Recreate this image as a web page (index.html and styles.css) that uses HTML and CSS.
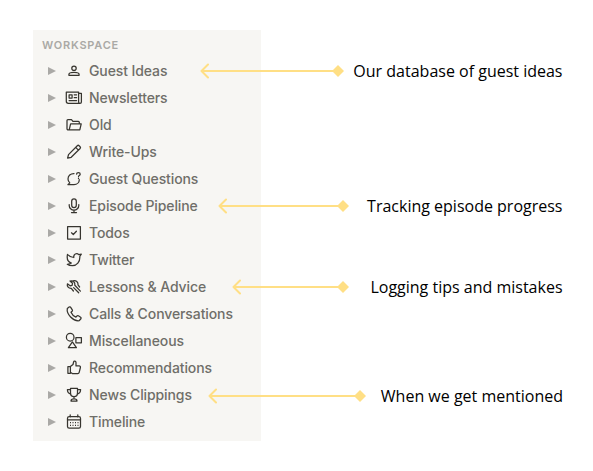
FILE: index.html
```
<!DOCTYPE html>
<html lang="en">
<head>
<meta charset="utf-8">
<title>Workspace</title>
<link rel="stylesheet" href="styles.css">
</head>
<body>
<nav class="sidebar">
  <h2 class="heading">WORKSPACE</h2>
  <ul class="pages">
    <li class="page"><i class="toggle"></i><svg class="icon" viewBox="0 0 18 18"><circle cx="9" cy="6.2" r="2.2"/><path d="M3.9 13.3v-.8c0-1.5 2.2-2.1 5.1-2.1s5.1.6 5.1 2.1v.8z"/></svg><span class="name">Guest Ideas</span>
      <div class="note note-ideas"><svg class="arrow" width="145" height="16"><path class="line" d="M1.5 8H138M8 1.5L1.5 8L8 14.5"/><path class="diamond" d="M138 2l6 6-6 6-6-6z"/></svg><span>Our database of guest ideas</span></div></li>
    <li class="page"><i class="toggle"></i><svg class="icon" viewBox="0 0 18 18"><path d="M14.9 14.3H3.3a2 2 0 0 1-2-2V3h12.3v9.9a1.4 1.4 0 0 0 2.8 0V4.4h-2.8M4.1 5.8h3v3.2h-3zM9.2 5.8h2.4M9.2 8.7h2.4M4.1 11.5h7.5"/></svg><span class="name">Newsletters</span></li>
    <li class="page"><i class="toggle"></i><svg class="icon" viewBox="0 0 18 18"><path d="M4.2 13.9H3.1A1.1 1.1 0 0 1 2 12.8V4.6c0-.5.4-.9.9-.9h3.6l1.4 1.7h5.5c.5 0 .9.4.9.9v1.3M4.2 13.9l1.4-6.1h10.6l-1.4 6.1z"/></svg><span class="name">Old</span></li>
    <li class="page"><i class="toggle"></i><svg class="icon" viewBox="0 0 18 18"><path d="M2.6 15.2l.9-3.6 8.8-8.9a1.3 1.3 0 0 1 1.8 0l1 1a1.3 1.3 0 0 1 0 1.8l-8.9 8.8zM10.7 4.4l2.7 2.7"/></svg><span class="name">Write-Ups</span></li>
    <li class="page"><i class="toggle"></i><svg class="icon" viewBox="0 0 18 18"><path d="M9 3.6C5.5 3.5 3 5.8 3 9c0 1.6.7 2.9 1.8 3.9l-1.9 1.7H9c3.1 0 5.3-2.2 5.3-4.9M11.6 4.1c.1-2 3.6-2 3.6.1 0 1.3-1.7 1.2-1.7 2.4M13.5 8v.5"/></svg><span class="name">Guest Questions</span></li>
    <li class="page"><i class="toggle"></i><svg class="icon" viewBox="0 0 18 18"><rect x="6.7" y="1.9" width="4.6" height="8.6" rx="2.3"/><path d="M4.2 7.6v.8a4.8 4.8 0 0 0 9.6 0v-.8M9 13.2v2.3M6.5 15.5h5"/></svg><span class="name">Episode Pipeline</span>
      <div class="note note-pipeline"><svg class="arrow" width="132" height="16"><path class="line" d="M1.5 8H125M8 1.5L1.5 8L8 14.5"/><path class="diamond" d="M125 2l6 6-6 6-6-6z"/></svg><span>Tracking episode progress</span></div></li>
    <li class="page"><i class="toggle"></i><svg class="icon" viewBox="0 0 18 18"><path d="M2.6 2.6h12.8V15H2.6zM6.5 8.8l1.8 1.7 3.1-3.3"/></svg><span class="name">Todos</span></li>
    <li class="page"><i class="toggle"></i><svg class="icon" viewBox="0 0 18 18"><path d="M2.5 3.4c1.7 2 3.8 3 6.3 3.1C8.3 3 11.8 1.6 13.8 3.6l2.5-.4-1.5 2.3c.4 5.6-3.1 9.2-7.3 9.2-2.2 0-4-.5-5.2-1.4 1.8 0 3-.5 4-1.3C2.8 10.9 1.7 7.4 2.5 3.4z"/></svg><span class="name">Twitter</span></li>
    <li class="page"><i class="toggle"></i><svg class="icon" viewBox="0 0 18 18"><path d="M8.4 13L6.3 10.3C3.6 10.5 1.8 8.3 2.4 5.8l2.7 2 2-.5.4-2L5 3C8 2.2 10.4 4.5 9.8 7.2l5.6 5.9M8 2.8c3-.9 5.4 1.3 5 4.1l1.6 2.1M8.6 9.6l5.1 5.2"/></svg><span class="name">Lessons &amp; Advice</span>
      <div class="note note-lessons"><svg class="arrow" width="118" height="16"><path class="line" d="M1.5 8H111M8 1.5L1.5 8L8 14.5"/><path class="diamond" d="M111 2l6 6-6 6-6-6z"/></svg><span>Logging tips and mistakes</span></div></li>
    <li class="page"><i class="toggle"></i><svg class="icon" viewBox="0 0 18 18"><path d="M4.1 2L2.3 3.4C1.3 9.2 8.2 16.4 14.1 15.7l1.8-1.9c.4-.6.3-1.2-.3-1.6l-2.2-1.4c-.5-.3-1.1-.3-1.5.2l-1 1.1C8.6 11.1 6.8 9.3 6 7.3l1.1-1c.4-.4.5-1 .2-1.5L5.7 2.3C5.3 1.7 4.6 1.6 4.1 2z"/></svg><span class="name">Calls &amp; Conversations</span></li>
    <li class="page"><i class="toggle"></i><svg class="icon" viewBox="0 0 18 18"><circle cx="5.2" cy="5.2" r="3.8"/><path d="M10.9 5.7h5.5v5.1h-5.5zM7.4 9.9l4 5.8h-8z"/></svg><span class="name">Miscellaneous</span></li>
    <li class="page"><i class="toggle"></i><svg class="icon" viewBox="0 0 18 18"><path d="M5.4 7.6H2.9v6.7h2.5M5.4 7.6v5.8l1.9 1.1h5.5c.7 0 1.2-.4 1.4-1.2l1.2-4.8c.2-.8-.3-1.6-1.3-1.6H11V3.6c0-1.6-2-1.9-2.3-.9L8 5.5z"/></svg><span class="name">Recommendations</span></li>
    <li class="page"><i class="toggle"></i><svg class="icon" viewBox="0 0 18 18"><path d="M5.5 2.4h7v4.8c0 4.4-7 4.4-7 0zM5.5 3.6H2.4c0 2.8.7 4 3.5 4.5M12.5 3.6h3.1c0 2.8-.7 4-3.5 4.5M9 10.6v2.2M6 15c0-2.8 6-2.8 6 0z"/></svg><span class="name">News Clippings</span>
      <div class="note note-news"><svg class="arrow" width="159" height="16"><path class="line" d="M1.5 8H152M8 1.5L1.5 8L8 14.5"/><path class="diamond" d="M152 2l6 6-6 6-6-6z"/></svg><span>When we get mentioned</span></div></li>
    <li class="page"><i class="toggle"></i><svg class="icon" viewBox="0 0 18 18"><rect x="2.5" y="3.5" width="13" height="11.7" rx="1.7"/><path d="M2.5 6.8h13M5.2 1.8v2M12.8 1.8v2"/><path class="dots" d="M5 9.6h8.5M5 12.3h8.5"/></svg><span class="name">Timeline</span></li>
  </ul>
</nav>
</body>
</html>
```
FILE: styles.css
```
* { box-sizing: border-box; }

body {
  margin: 0;
  padding: 30px 0 0 33px;
  background: #fff;
}

.sidebar {
  width: 228px;
  height: 411px;
  background: #f7f6f3;
  font-family: Inter, sans-serif;
}

.heading {
  margin: 0;
  padding-left: 9px;
  height: 27px;
  font-size: 11px;
  font-weight: 600;
  line-height: 30px;
  letter-spacing: 0.78px;
  color: #aaa9a5;
}

.pages {
  margin: 0;
  padding: 0;
  list-style: none;
}

.page {
  position: relative;
  display: flex;
  align-items: center;
  height: 27px;
  padding-left: 14.5px;
}

.toggle {
  border-left: 8px solid #aaa9a6;
  border-top: 4.5px solid transparent;
  border-bottom: 4.5px solid transparent;
}

.icon {
  width: 18px;
  height: 18px;
  margin: 0 6px 0 9.5px;
  fill: none;
  stroke: #37352f;
  stroke-width: 1.25;
  stroke-linejoin: round;
  stroke-linecap: round;
}

.dots {
  stroke-dasharray: 1 1.5;
  stroke-linecap: butt;
}

.name {
  font-size: 14px;
  font-weight: 500;
  line-height: 27px;
  letter-spacing: -0.1px;
  color: #6f6e69;
  white-space: nowrap;
}

.note {
  position: absolute;
  top: 0;
  right: -301.5px;
  height: 27px;
  display: flex;
  align-items: center;
  justify-content: space-between;
  font-family: "Open Sans", sans-serif;
  font-size: 16px;
  color: #000;
  white-space: nowrap;
}

.note-ideas { left: 166.5px; }
.note-pipeline { left: 184.5px; }
.note-lessons { left: 198.5px; }
.note-news { left: 174.5px; right: -302px; top: 1px; }

.arrow { flex: none; }

.line {
  fill: none;
  stroke: #ffdf85;
  stroke-width: 2;
  stroke-linecap: round;
  stroke-linejoin: round;
}

.diamond { fill: #ffdf85; }
```
